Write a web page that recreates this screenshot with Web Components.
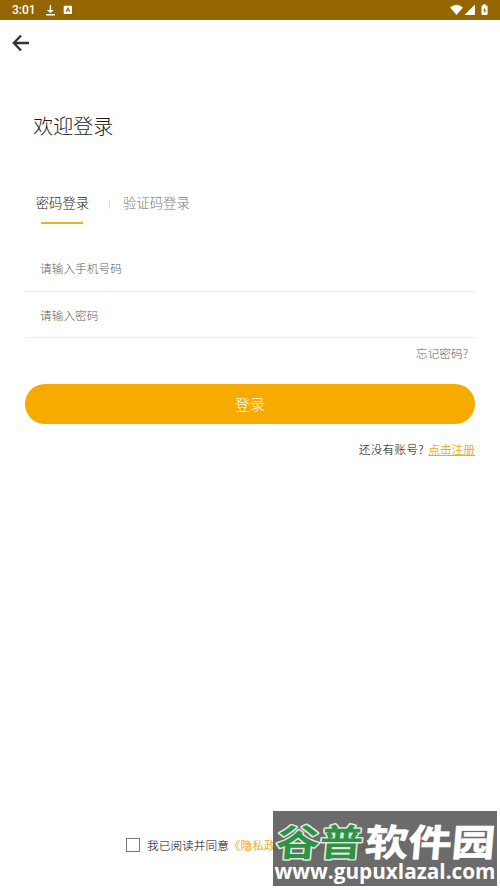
<!DOCTYPE html>
<html lang="zh-CN">
<head>
<meta charset="utf-8">
<title>欢迎登录</title>
<style>
html,body{margin:0;height:890px;overflow:hidden;background:#fff}
body{font-family:"Noto Sans CJK SC",sans-serif;font-weight:300;color:#000}
</style>
</head>
<body>
<login-page></login-page>
<script>
const define = (name, html) => customElements.define(name, class extends HTMLElement {
  constructor() {
    super();
    const t = document.createElement('template');
    t.innerHTML = html;
    this.attachShadow({mode: 'open'}).append(t.content.cloneNode(true));
  }
});

define('status-bar', `<style>
:host{display:flex;height:20px;background:#956500;align-items:center;box-sizing:border-box;padding:0 11px 0 12px;color:#fff;font:500 12px/20px Roboto,sans-serif}
span{width:33px}.gap{flex:1}svg{display:block;fill:#fff}
</style><span>3:01</span>
<svg width="12" height="14" viewBox="0 0 12 14"><path d="M4.700 2h1.400v5H9L5.400 10 1.800 7h2.900zM1 11h9v1.400H1z"/></svg>
<svg style="margin-left:6px" width="10" height="10" viewBox="0 0 10 10"><path fill-rule="evenodd" d="M1.500.7h6.700q.8 0 .8.8v6.800q0 .8-.8.8H1.500q-.8 0-.8-.8V1.500q0-.8.8-.8zM4.300 2.500 2.500 7h1l.4-1h2l.4 1h1L5.500 2.500zM4.900 3.800l.6 1.400H4.300z"/></svg>
<div class="gap"></div>
<svg width="39" height="14" viewBox="0 0 39 14"><path d="M0 4.400Q6.500-.7 13 4.400L6.500 12zM25 1.500V12H14.500zM33.300 2.500V1.300h2.400v1.200h1q.9 0 .9.900V11q0 .9-.9.900h-4.300q-.9 0-.9-.9V3.400q0-.9.9-.9z"/><path d="M35.200 4.200 33 7.700h1.400v2.800L36.200 7h-1.300z" fill="#956500"/></svg>`);

define('nav-bar', `<style>:host{display:flex;height:46px;box-sizing:border-box;padding:14px 12px}svg{fill:none;stroke:#333;stroke-width:2.300}</style>
<svg width="18" height="18" viewBox="0 0 18 18"><path d="M17 9H2.500M9 1.500 1.800 9 9 16.500"/></svg>`);

define('login-tabs', `<style>
:host{display:flex;height:32px;align-items:flex-start;font-size:13.330px;line-height:20px;color:#777;padding-left:10.800px}
.on{color:#222;display:flex;flex-direction:column;align-items:center}
.on::after{content:"";width:42px;height:2px;margin-top:8.500px;background:#eab02d}
i{width:1px;height:9px;background:#ddd;margin:7px 13px 0 20px}
</style><div class="on">密码登录</div><i></i><div>验证码登录</div>`);

define('form-field', `<style>:host{display:flex;height:46px;box-sizing:border-box;border-bottom:1px solid #ebebeb;padding:var(--field-top,0) 0 1px 15px;align-items:center;font-size:11.700px;line-height:18px;color:#606060}</style><slot></slot>`);

define('primary-button', `<style>:host{display:flex;height:40px;border-radius:20px;background:#f7ab00;color:#fff;font-size:15px;line-height:40px;justify-content:center}</style><slot></slot>`);

define('agree-row', `<style>:host{display:flex;align-items:center;font-size:11.700px;line-height:18px;white-space:nowrap}
.box{width:12px;height:12px;border:1px solid #777;margin-right:7px}b{font-weight:400;color:#f2ac20}</style>
<div class="box"></div><span>我已阅读并同意</span><b>《隐私政策》</b><span>和</span><b>《用户协议》</b>`);

define('site-watermark', `<style>:host{display:block;width:224px;height:75px;background:rgba(70,70,70,.8)}svg{display:block}
text{font-family:"Noto Sans CJK SC",sans-serif;font-weight:700;font-size:43px}.url{font-family:"Open Sans",sans-serif;font-weight:700;font-size:20.500px;fill:#fff}</style>
<svg width="224" height="75" viewBox="0 0 224 75">
<g transform="translate(0 44.500) skewX(-5) scale(1 .86)">
<text x="2" y="0" textLength="87" lengthAdjust="spacingAndGlyphs" fill="#2e9245" stroke="#dfe9df" stroke-width="3.400" paint-order="stroke" stroke-linejoin="round">谷普</text>
<text x="91" y="0" textLength="130" lengthAdjust="spacingAndGlyphs" fill="#fff" stroke="#fff" stroke-width=".8">软件园</text></g>
<text class="url" x="1.500" y="68" textLength="221" lengthAdjust="spacingAndGlyphs">www.gupuxlazal.com</text></svg>`);

define('login-page', `<style>
:host{display:flex;flex-direction:column;position:relative;width:500px;height:890px;overflow:hidden;background:#fff}
main{padding:0 25px;display:flex;flex-direction:column;flex:1}
h1{font-weight:300;font-size:20px;line-height:30px;color:#1c1c1c;margin:44.500px 0 52.500px 8.300px}
login-tabs{margin-bottom:21px}
.second{--field-top:2px}
.forgot{align-self:flex-end;font-size:11.700px;line-height:18px;color:#606060;margin:6px 7px 22px 0}
.join{align-self:flex-end;font-size:11.700px;line-height:18px;margin-top:16px;display:flex;gap:4.500px}
.join span{letter-spacing:.2px}
a{font-weight:400;color:#efaa25;text-decoration:underline;text-underline-offset:1px}
agree-row{margin:0 0 36px 126px}
site-watermark{position:absolute;left:273px;top:811px}
</style>
<status-bar></status-bar><nav-bar></nav-bar>
<main><h1>欢迎登录</h1><login-tabs></login-tabs>
<form-field>请输入手机号码</form-field><form-field class="second">请输入密码</form-field>
<div class="forgot">忘记密码?</div><primary-button>登录</primary-button>
<div class="join"><span>还没有账号?</span><a>点击注册</a></div></main>
<agree-row></agree-row><site-watermark></site-watermark>`);
</script>
</body>
</html>
